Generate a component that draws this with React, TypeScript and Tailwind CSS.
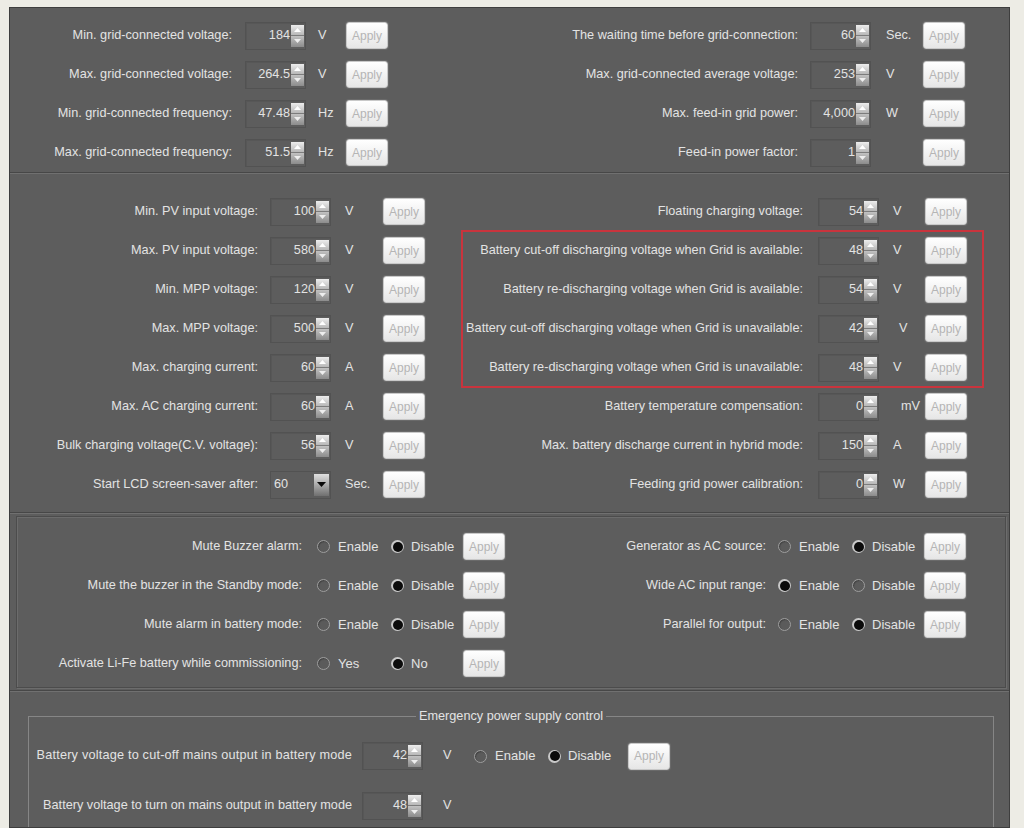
import React from 'react';

type Field = { label: string; value: string; unit: string; combo?: boolean; unitClass?: string };
type Toggle = { label: string; on: 0 | 1; a?: string; b?: string };

const gridLeft: Field[] = [
  { label: 'Min. grid-connected voltage:', value: '184', unit: 'V' },
  { label: 'Max. grid-connected voltage:', value: '264.5', unit: 'V' },
  { label: 'Min. grid-connected frequency:', value: '47.48', unit: 'Hz' },
  { label: 'Max. grid-connected frequency:', value: '51.5', unit: 'Hz' },
];

const gridRight: Field[] = [
  { label: 'The waiting time before grid-connection:', value: '60', unit: 'Sec.' },
  { label: 'Max. grid-connected average voltage:', value: '253', unit: 'V' },
  { label: 'Max. feed-in grid power:', value: '4,000', unit: 'W' },
  { label: 'Feed-in power factor:', value: '1', unit: '' },
];

const battLeft: Field[] = [
  { label: 'Min. PV input voltage:', value: '100', unit: 'V' },
  { label: 'Max. PV input voltage:', value: '580', unit: 'V' },
  { label: 'Min. MPP voltage:', value: '120', unit: 'V' },
  { label: 'Max. MPP voltage:', value: '500', unit: 'V' },
  { label: 'Max. charging current:', value: '60', unit: 'A' },
  { label: 'Max. AC charging current:', value: '60', unit: 'A' },
  { label: 'Bulk charging voltage(C.V. voltage):', value: '56', unit: 'V' },
  { label: 'Start LCD screen-saver after:', value: '60', unit: 'Sec.', combo: true },
];

const battRightTop: Field = { label: 'Floating charging voltage:', value: '54', unit: 'V' };

const battRed: Field[] = [
  { label: 'Battery cut-off discharging voltage when Grid is available:', value: '48', unit: 'V' },
  { label: 'Battery re-discharging voltage when Grid is available:', value: '54', unit: 'V' },
  { label: 'Battery cut-off discharging voltage when Grid is unavailable:', value: '42', unit: 'V', unitClass: 'pl-[6px]' },
  { label: 'Battery re-discharging voltage when Grid is unavailable:', value: '48', unit: 'V' },
];

const battRightBottom: Field[] = [
  { label: 'Battery temperature compensation:', value: '0', unit: 'mV', unitClass: 'pl-[8px]' },
  { label: 'Max. battery discharge current in hybrid mode:', value: '150', unit: 'A' },
  { label: 'Feeding grid power calibration:', value: '0', unit: 'W' },
];

const togglesLeft: Toggle[] = [
  { label: 'Mute Buzzer alarm:', on: 1 },
  { label: 'Mute the buzzer in the Standby mode:', on: 1 },
  { label: 'Mute alarm in battery mode:', on: 1 },
  { label: 'Activate Li-Fe battery while commissioning:', on: 1, a: 'Yes', b: 'No' },
];

const togglesRight: Toggle[] = [
  { label: 'Generator as AC source:', on: 1 },
  { label: 'Wide AC input range:', on: 0 },
  { label: 'Parallel for output:', on: 1 },
];

function Spin() {
  return (
    <div className="flex h-[22px] w-[13px] flex-col">
      <div className="flex h-[11px] items-center justify-center border-b border-[#7c7c7c] bg-gradient-to-b from-[#ededed] to-[#b8b8b8]">
        <svg width="7" height="4" viewBox="0 0 7 4">
          <path d="M0 4L3.5 0L7 4Z" fill="#ffffff" />
        </svg>
      </div>
      <div className="flex h-[11px] items-center justify-center bg-gradient-to-b from-[#c2c2c2] to-[#8c8c8c]">
        <svg width="7" height="4" viewBox="0 0 7 4">
          <path d="M0 0L7 0L3.5 4Z" fill="#eeeeee" />
        </svg>
      </div>
    </div>
  );
}

function NumBox({ value }: { value: string }) {
  return (
    <div className="flex h-[28px] w-[61px] shrink-0 items-center justify-end border border-[#525252] pr-px shadow-[inset_1px_1px_0_#575757]">
      <span className="pr-px">{value}</span>
      <Spin />
    </div>
  );
}

function Combo({ value }: { value: string }) {
  return (
    <div className="flex h-[28px] w-[61px] shrink-0 items-center justify-between border border-[#525252] pl-[3px] pr-px">
      <span>{value}</span>
      <div className="flex h-[22px] w-[15px] items-center justify-center bg-gradient-to-b from-[#e0e0e0] via-[#a9a9a9] to-[#707070]">
        <svg width="9" height="5" viewBox="0 0 9 5">
          <path d="M0 0L9 0L4.5 5Z" fill="#0a0a0a" />
        </svg>
      </div>
    </div>
  );
}

function Apply() {
  return (
    <button
      type="button"
      className="flex h-[27px] w-[42px] shrink-0 items-center justify-center rounded-[3px] border border-[#c9c9c9] bg-gradient-to-b from-white to-[#e6e6e6] text-[12px] text-[#b5b5b5] shadow-[0_0_0_1px_#6a6a6a]"
    >
      Apply
    </button>
  );
}

function Radio({ on }: { on?: boolean }) {
  if (on) {
    return (
      <span className="flex h-[13px] w-[13px] shrink-0 items-center justify-center rounded-full bg-[#c9c9c9]">
        <span className="h-[10px] w-[10px] rounded-full bg-[#0b0b0b]" />
      </span>
    );
  }
  return (
    <span className="h-[13px] w-[13px] shrink-0 rounded-full border border-[#9d9d9d] bg-[#5b5b5b] shadow-[inset_1px_1px_1px_#444]" />
  );
}

function GridRow({ l, r }: { l: Field; r: Field }) {
  return (
    <div className="flex h-[39px] items-center">
      <div className="w-[215px] whitespace-nowrap text-right">{l.label}</div>
      <div className="ml-[13px]"><NumBox value={l.value} /></div>
      <div className="ml-[12px] w-[28px]">{l.unit}</div>
      <Apply />
      <div className="w-[410px] whitespace-nowrap text-right">{r.label}</div>
      <div className="ml-[12px]"><NumBox value={r.value} /></div>
      <div className="ml-[15px] w-[37px]">{r.unit}</div>
      <Apply />
    </div>
  );
}

function LeftRow({ f }: { f: Field }) {
  return (
    <div className="flex h-[39px] items-center">
      <div className="w-[241px] whitespace-nowrap text-right">{f.label}</div>
      <div className="ml-[12px]">{f.combo ? <Combo value={f.value} /> : <NumBox value={f.value} />}</div>
      <div className="ml-[14px] w-[38px]">{f.unit}</div>
      <Apply />
    </div>
  );
}

function RightRow({ f }: { f: Field }) {
  return (
    <div className="flex h-[39px] items-center pr-[16px]">
      <div className="w-[341px] whitespace-nowrap text-right">{f.label}</div>
      <div className="ml-[15px]"><NumBox value={f.value} /></div>
      <div className={`ml-[14px] w-[32px] ${f.unitClass ?? ''}`}>{f.unit}</div>
      <Apply />
    </div>
  );
}

function Choice({ t }: { t: Toggle }) {
  return (
    <>
      <Radio on={t.on === 0} />
      <span className="ml-[8px] w-[53px] text-[13px]">{t.a ?? 'Enable'}</span>
      <Radio on={t.on === 1} />
      <span className="ml-[7px] w-[52px] text-[13px]">{t.b ?? 'Disable'}</span>
    </>
  );
}

function ToggleRow({ l, r }: { l: Toggle; r?: Toggle }) {
  return (
    <div className="flex h-[39px] items-center">
      <div className="w-[285px] whitespace-nowrap text-right">{l.label}</div>
      <div className="ml-[15px] flex items-center">
        <Choice t={l} />
      </div>
      <Apply />
      {r && (
        <>
          <div className="w-[261px] whitespace-nowrap text-right">{r.label}</div>
          <div className="ml-[12px] flex items-center">
            <Choice t={r} />
          </div>
          <Apply />
        </>
      )}
    </div>
  );
}

export default function App() {
  return (
    <div className="flex h-[836px] w-[1024px] flex-col overflow-hidden bg-[#edece5] font-['Liberation_Sans',Arial,sans-serif] text-[12.7px] text-[#e3e3e3]">
      <div className="h-[7px] shrink-0" />
      <div className="ml-[9px] h-[821px] w-[1001px] shrink-0 overflow-hidden border border-[#3e3e3e] bg-[#5d5d5d]">
        {/* grid connection */}
        <section className="h-[165px] border-b border-[#474747] pl-[7px] pt-[8px]">
          {gridLeft.map((f, i) => (
            <GridRow key={f.label} l={f} r={gridRight[i]} />
          ))}
        </section>

        {/* PV / battery */}
        <section className="flex border-b border-t border-[#474747] border-t-[#707070] pb-[8px] pl-[7px] pt-[18px]">
          <div className="flex flex-col">
            {battLeft.map((f) => (
              <LeftRow key={f.label} f={f} />
            ))}
          </div>
          <div className="ml-[37px] flex flex-col">
            <RightRow f={battRightTop} />
            <div className="outline-2 -outline-offset-1 outline-[#c9343d] outline">
              {battRed.map((f) => (
                <RightRow key={f.label} f={f} />
              ))}
            </div>
            {battRightBottom.map((f) => (
              <RightRow key={f.label} f={f} />
            ))}
          </div>
        </section>

        {/* alarms */}
        <section className="border-b border-t border-[#474747] border-t-[#707070] pb-[2px] pt-[2px]">
          <div className="ml-[6px] w-[990px] border border-[#4c4c4c] pb-[4px] pt-[10px] shadow-[1px_1px_0_#6c6c6c,inset_1px_1px_0_#6c6c6c]">
            {togglesLeft.map((t, i) => (
              <ToggleRow key={t.label} l={t} r={togglesRight[i]} />
            ))}
          </div>
        </section>

        {/* emergency */}
        <section className="border-t border-[#707070] pt-[17px]">
          <fieldset className="ml-[18px] w-[966px] border border-[#868686] pb-[20px] pt-[18px]">
            <legend className="mx-auto px-[3px] leading-[15px]">Emergency power supply control</legend>
            <div className="flex h-[28px] items-center">
              <div className="w-[323px] whitespace-nowrap text-right tracking-[0.2px]">Battery voltage to cut-off mains output in battery mode</div>
              <div className="ml-[10px]"><NumBox value="42" /></div>
              <div className="ml-[20px] w-[31px]">V</div>
              <Choice t={{ label: '', on: 1 }} />
              <span className="w-[8px]" />
              <Apply />
            </div>
            <div className="mt-[22px] flex h-[28px] items-center">
              <div className="w-[323px] whitespace-nowrap text-right">Battery voltage to turn on mains output in battery mode</div>
              <div className="ml-[10px]"><NumBox value="48" /></div>
              <div className="ml-[20px] w-[31px]">V</div>
            </div>
          </fieldset>
        </section>
      </div>
      <div className="flex-1 bg-white" />
    </div>
  );
}
